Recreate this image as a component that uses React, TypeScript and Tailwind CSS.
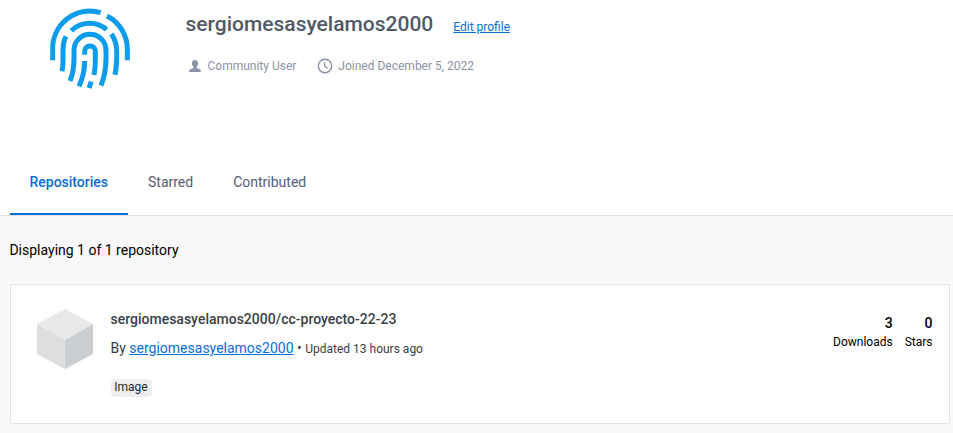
function Fingerprint() {
  return (
    <svg className="h-[100px] w-[100px] shrink-0" viewBox="0 0 300 300" fill="none" stroke="#0b9cee" strokeWidth="15" strokeLinejoin="round">
      <path d="M38 181V148A112 112 0 0 1 182 38" />
      <path d="M201 48A112 112 0 0 1 262 148V181" />
      <path d="M78 109Q69 126 69 150V180Q69 198 66 214" />
      <path d="M94 92A78 78 0 0 1 200 89" />
      <path d="M214 102Q230 124 230 153Q231 195 225 224" />
      <path d="M90 243Q102 214 102 175V150A48 47 0 0 1 198 150V175Q198 220 183 257" />
      <path d="M134 164V154A16 16 0 0 1 166 154V180Q166 205 162 225" />
      <path d="M134 183Q134 222 117 259" />
      <path d="M154 245L147 264" />
    </svg>
  );
}

function UserIcon() {
  return (
    <svg className="h-3 w-3 shrink-0" viewBox="0 0 12 12" fill="#8993a5">
      <path d="M6 0C4.100 0 2.900 1.300 2.900 3.200c0 1.600.7 2.800 1.600 3.500v1.300L1.400 9.200C.5 9.600.2 10.200.2 12h11.600c0-1.800-.3-2.400-1.200-2.800L7.500 8V6.700C8.400 6 9.100 4.800 9.100 3.200 9.100 1.300 7.900 0 6 0Z" />
    </svg>
  );
}

function ClockIcon() {
  return (
    <svg className="h-4 w-4 shrink-0" viewBox="0 0 16 16" fill="none" stroke="#8993a5">
      <circle cx="8" cy="8" r="6.700" strokeWidth="1.400" />
      <path d="M7.700 4v4.300l3 1.900" strokeWidth="1.200" />
    </svg>
  );
}

function Cube() {
  return (
    <svg className="h-[60px] w-14 shrink-0" viewBox="0 0 56 60">
      <path fill="#e8e9ea" d="M28 0 56 15 28 31 0 15Z" />
      <path fill="#dcdee0" d="M0 15 28 31V60L0 45Z" />
      <path fill="#caced1" d="M56 15 28 31V60L56 45Z" />
    </svg>
  );
}

function Stat({ value, label }: { value: number; label: string }) {
  return (
    <div className="flex flex-col items-end">
      <span className="text-sm leading-5 font-medium">{value}</span>
      <span className="text-xs leading-[18px]">{label}</span>
    </div>
  );
}

export default function App() {
  return (
    <div className="flex h-[433px] w-[953px] flex-col overflow-hidden bg-[#f9f9fa] font-[Roboto,sans-serif] text-sm text-black">
      <header className="flex h-[149px] bg-white pl-10">
        <Fingerprint />
        <div className="pl-[45.500px]">
          <div className="flex h-12 items-center">
            <h1 className="text-[21px] leading-6 font-medium text-[#505968]">sergiomesasyelamos2000</h1>
            <a href="#" className="mt-[5px] ml-5 text-xs text-[#086dd7] underline">Edit profile</a>
          </div>
          <div className="mt-[9px] flex items-center text-xs leading-[18px] text-[#8993a5]">
            <span className="ml-[3px] flex items-center gap-[7px]">
              <UserIcon />
              Community User
            </span>
            <span className="ml-[21px] flex items-center gap-[5px]">
              <ClockIcon />
              Joined December 5, 2022
            </span>
          </div>
        </div>
      </header>
      <nav className="flex h-[67px] border-b border-[#e1e2e6] bg-white pl-2.5 text-[#556072]">
        <a className="flex h-[66px] w-[118px] items-center justify-center border-b-2 border-[#086dd7] pt-[2px] pr-[0.500px] font-medium text-[#086dd7]">Repositories</a>
        <a className="ml-5 flex h-[66px] items-center">Starred</a>
        <a className="ml-10 flex h-[66px] items-center">Contributed</a>
      </nav>
      <main className="pr-[3px] pl-2.5">
        <p className="-ml-[0.600px] flex h-[68px] items-center">Displaying 1 of 1 repository</p>
        <article className="flex h-[140px] rounded-xs border border-[#e1e2e6] bg-white pt-6 pr-[16.500px] pl-[26px]">
          <Cube />
          <div className="ml-[17.500px] grow text-[#393f49]">
            <h2 className="leading-5 font-medium">sergiomesasyelamos2000/cc-proyecto-22-23</h2>
            <p className="mt-[9px] leading-5">
              By <a href="#" className="text-[#086dd7] underline">sergiomesasyelamos2000</a> • <span className="text-xs">Updated 13 hours ago</span>
            </p>
            <span className="mt-[21px] flex h-[18px] w-[41px] items-center justify-center rounded bg-[#efeff2] pb-[2px] text-xs text-[#27282b]">Image</span>
          </div>
          <div className="mt-1 flex gap-3">
            <Stat value={3} label="Downloads" />
            <Stat value={0} label="Stars" />
          </div>
        </article>
      </main>
    </div>
  );
}
